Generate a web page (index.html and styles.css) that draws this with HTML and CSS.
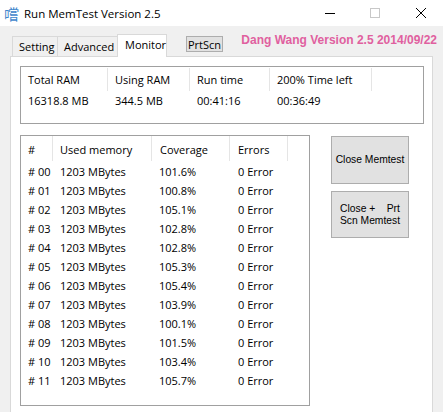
FILE: index.html
```html
<!DOCTYPE html>
<html>
<head>
<meta charset="utf-8">
<link rel="stylesheet" href="styles.css">
</head>
<body>
<div class="window">
  <div class="titlebar">
    <span class="app-icon">嚐</span>
    <span class="title">Run MemTest Version 2.5</span>
    <div class="controls">
      <span class="ctl ctl-min"><svg width="10" height="10" viewBox="0 0 10 10"><path d="M0 5.5H10" stroke="#000" stroke-width="1"/></svg></span>
      <span class="ctl ctl-max"><svg width="10" height="10" viewBox="0 0 10 10"><rect x="0.5" y="0.5" width="9" height="9" fill="none" stroke="#c8c8c8" stroke-width="1"/></svg></span>
      <span class="ctl ctl-close"><svg width="10" height="10" viewBox="0 0 10 10"><path d="M0 0L10 10M10 0L0 10" stroke="#000" stroke-width="1"/></svg></span>
    </div>
  </div>
  <div class="client">
    <div class="tabrow">
      <div class="tabs">
        <span class="tab">Setting</span>
        <span class="tab">Advanced</span>
        <span class="tab tab-active">Monitor</span>
      </div>
      <span class="prtscn">PrtScn</span>
      <span class="brand">Dang Wang Version 2.5 2014/09/22</span>
    </div>
    <div class="panel">
      <div class="stats">
        <div class="stats-row stats-head">
          <span class="sc sc1">Total RAM</span>
          <span class="sc sc2">Using RAM</span>
          <span class="sc sc3">Run time</span>
          <span class="sc sc4">200% Time left</span>
          <span class="sc sc5"></span>
        </div>
        <div class="stats-row">
          <span class="sc sc1">16318.8 MB</span>
          <span class="sc sc2">344.5 MB</span>
          <span class="sc sc3">00:41:16</span>
          <span class="sc sc4">00:36:49</span>
          <span class="sc sc5"></span>
        </div>
      </div>
      <div class="lower">
        <div class="list">
          <div class="lrow lhead">
            <span class="lc lc1">#</span>
            <span class="lc lc2">Used memory</span>
            <span class="lc lc3">Coverage</span>
            <span class="lc lc4">Errors</span>
          </div>
          <div class="lrow"><span class="lc lc1"># 00</span><span class="lc lc2">1203 MBytes</span><span class="lc lc3">101.6%</span><span class="lc lc4">0 Error</span></div>
          <div class="lrow"><span class="lc lc1"># 01</span><span class="lc lc2">1203 MBytes</span><span class="lc lc3">100.8%</span><span class="lc lc4">0 Error</span></div>
          <div class="lrow"><span class="lc lc1"># 02</span><span class="lc lc2">1203 MBytes</span><span class="lc lc3">105.1%</span><span class="lc lc4">0 Error</span></div>
          <div class="lrow"><span class="lc lc1"># 03</span><span class="lc lc2">1203 MBytes</span><span class="lc lc3">102.8%</span><span class="lc lc4">0 Error</span></div>
          <div class="lrow"><span class="lc lc1"># 04</span><span class="lc lc2">1203 MBytes</span><span class="lc lc3">102.8%</span><span class="lc lc4">0 Error</span></div>
          <div class="lrow"><span class="lc lc1"># 05</span><span class="lc lc2">1203 MBytes</span><span class="lc lc3">105.3%</span><span class="lc lc4">0 Error</span></div>
          <div class="lrow"><span class="lc lc1"># 06</span><span class="lc lc2">1203 MBytes</span><span class="lc lc3">105.4%</span><span class="lc lc4">0 Error</span></div>
          <div class="lrow"><span class="lc lc1"># 07</span><span class="lc lc2">1203 MBytes</span><span class="lc lc3">103.9%</span><span class="lc lc4">0 Error</span></div>
          <div class="lrow"><span class="lc lc1"># 08</span><span class="lc lc2">1203 MBytes</span><span class="lc lc3">100.1%</span><span class="lc lc4">0 Error</span></div>
          <div class="lrow"><span class="lc lc1"># 09</span><span class="lc lc2">1203 MBytes</span><span class="lc lc3">101.5%</span><span class="lc lc4">0 Error</span></div>
          <div class="lrow"><span class="lc lc1"># 10</span><span class="lc lc2">1203 MBytes</span><span class="lc lc3">103.4%</span><span class="lc lc4">0 Error</span></div>
          <div class="lrow"><span class="lc lc1"># 11</span><span class="lc lc2">1203 MBytes</span><span class="lc lc3">105.7%</span><span class="lc lc4">0 Error</span></div>
        </div>
        <div class="buttons">
          <div class="btn btn1">Close Memtest</div>
          <div class="btn btn2"><span class="pre">Close +    Prt</span><span>Scn Memtest</span></div>
        </div>
      </div>
    </div>
  </div>
</div>
</body>
</html>
```
FILE: styles.css
```css
* { box-sizing: border-box; }
html, body { margin: 0; padding: 0; }
body {
  width: 443px;
  height: 412px;
  overflow: hidden;
  background: #f0f0f0;
  font-family: "Open Sans", "Liberation Sans", sans-serif;
  font-size: 11px;
  color: #000;
}
.window { width: 443px; height: 412px; display: flex; flex-direction: column; }

.titlebar {
  height: 26px;
  background: #fff;
  display: flex;
  align-items: center;
  flex: none;
}
.app-icon {
  font-family: "Noto Sans CJK SC", sans-serif;
  font-size: 15px;
  color: #3f86cc;
  width: 15px;
  margin-left: 4px;
  line-height: 15px;
  margin-top: 1px;
}
.title {
  margin-left: 5px;
  font-size: 11.5px;
  color: #000;
}
.controls { margin-left: auto; display: flex; height: 26px; }
.ctl { width: 46px; display: flex; align-items: center; justify-content: center; }
.ctl-min { margin-right: -1px; }
.ctl-close { width: 45px; }

.client { flex: 1; display: flex; flex-direction: column; }

.tabrow {
  height: 30px;
  display: flex;
  align-items: flex-end;
  padding-left: 12px;
  position: relative;
}
.tabs { display: flex; align-items: flex-end; }
.tab {
  height: 20px;
  border: 1px solid #d9d9d9;
  border-bottom: none;
  background: #f0f0f0;
  padding: 0 6px;
  display: flex;
  align-items: center;
  font-size: 11px;
  margin-right: -1px;
  line-height: 1;
}
.tab:nth-child(1) { width: 46px; }
.tab:nth-child(2) { width: 61px; }
.tab-active {
  height: 23px;
  width: 50px;
  background: #fff;
  margin-bottom: -1px;
  padding-left: 7px;
  padding-bottom: 3px;
  position: relative;
  z-index: 1;
}
.prtscn {
  align-self: flex-start;
  margin-top: 10px;
  margin-left: 20px;
  width: 37px;
  height: 16px;
  border: 1px solid #adadad;
  background: #e1e1e1;
  font-size: 11px;
  display: flex;
  align-items: center;
  justify-content: center;
  line-height: 1;
}
.brand {
  align-self: flex-start;
  margin-top: 7px;
  margin-left: auto;
  margin-right: 6px;
  font-family: "Liberation Sans", Arial, sans-serif;
  font-weight: bold;
  font-size: 12px;
  color: #e0609f;
}

.panel {
  margin-left: 10px;
  width: 423px;
  flex: 1;
  background: #fff;
  border: 1px solid #d9d9d9;
  border-bottom: none;
  padding: 9px 0 0 9px;
}

.stats {
  width: 404px;
  height: 58px;
  border: 1px solid #a0a0a0;
  padding-top: 1px;
}
.stats-row { display: flex; height: 23px; align-items: center; }
.stats-row + .stats-row { height: 19px; }
.sc { padding-left: 7px; white-space: nowrap; height: 100%; display: flex; align-items: center; }
.sc1 { width: 87px; padding-left: 7px; }
.sc2 { width: 82px; }
.sc3 { width: 80px; }
.sc4 { width: 102px; }
.sc5 { flex: 1; }
.stats-head .sc1, .stats-head .sc2, .stats-head .sc3, .stats-head .sc4 {
  border-right: 1px solid #e5e5e5;
}

.lower { display: flex; margin-top: 11px; }
.list {
  width: 290px;
  height: 271px;
  border: 1px solid #a0a0a0;
}
.lrow { display: flex; height: 19px; align-items: center; }
.lhead { height: 25px; margin-bottom: 1px; }
.lc { padding-left: 7px; white-space: nowrap; height: 100%; display: flex; align-items: center; }
.lc1 { width: 32px; }
.lc2 { width: 99px; }
.lc3 { width: 78px; padding-left: 7px; }
.lc4 { width: 58px; padding-left: 8px; }
.lhead .lc { border-right: 1px solid #e5e5e5; padding-top: 1px; }
.lhead .lc3 { padding-left: 8px; }

.buttons { margin-left: 21px; margin-top: 1px; display: flex; flex-direction: column; gap: 7px; }
.btn {
  width: 78px;
  border: 1px solid #adadad;
  background: #e1e1e1;
  font-family: "Liberation Sans", Arial, sans-serif;
  font-size: 10.3px;
  display: flex;
  flex-direction: column;
  align-items: center;
  justify-content: center;
  line-height: 12px;
  text-align: center;
}
.btn1 { height: 48px; }
.btn2 { height: 47px; }
.pre { white-space: pre; }
```
